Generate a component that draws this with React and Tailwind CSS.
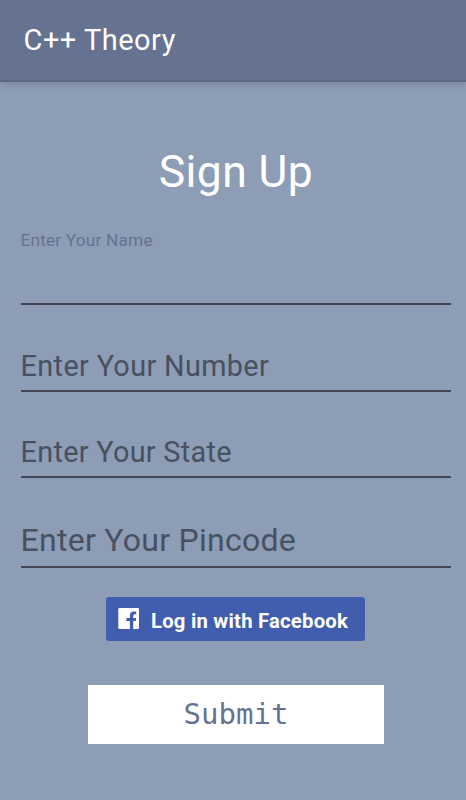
function Field({ label, className, textClassName }) {
  return (
    <div className={`flex w-[430px] border-b-2 border-[#424554] whitespace-nowrap ${className}`}>
      <span className={textClassName}>{label}</span>
    </div>
  );
}

function FacebookMark() {
  return (
    <svg width="22" height="22" viewBox="0 0 22 22" aria-hidden="true" className="shrink-0">
      <path
        fill="#fff"
        d="M1.5 0H19.8a1.2 1.2 0 0 1 1.2 1.2V19.8a1.2 1.2 0 0 1-1.2 1.2H15.2V13H17.7L18.1 10.1H15.2V8C15.2 6.9 15.7 6.3 16.9 6.3H18.2V3.7C17.7 3.6 16.8 3.5 16 3.5C13.4 3.5 11.9 5 11.9 7.6V10.1H8.4V13H11.9V21H1.5A1.2 1.2 0 0 1 .3 19.8V1.2A1.2 1.2 0 0 1 1.5 0Z"
      />
    </svg>
  );
}

export default function App() {
  return (
    <div className="flex h-[800px] w-[466px] flex-col overflow-hidden bg-[#8d9db6] font-['Roboto',sans-serif]">
      <header className="flex h-[82px] shrink-0 items-start border-b-2 border-[#5c6781] bg-[#667292] pl-[23.5px] shadow-[0_1px_8px_rgba(60,70,85,0.35)]">
        <h1 className="text-[29px] leading-[80px] tracking-[0.5px] text-white">C++ Theory</h1>
      </header>
      <main className="flex flex-col pl-[21px]">
        <h2 className="mt-[63px] h-[54px] w-[430px] text-center text-[44.5px] leading-[54px] tracking-[0.4px] text-white">Sign Up</h2>
        <Field label="Enter Your Name" className="mt-[31px] h-[75px]" textClassName="-ml-[0.5px] text-[17.3px] leading-[20px] tracking-[0.17px] text-[#667292]" />
        <Field label="Enter Your Number" className="mt-[41px] h-[46px]" textClassName="-ml-[0.4px] text-[28.8px] leading-[40px] tracking-[0.36px] text-[#47515f]" />
        <Field label="Enter Your State" className="mt-[40px] h-[46px]" textClassName="-ml-[0.4px] text-[28.8px] leading-[41px] tracking-[0.3px] text-[#47515f]" />
        <Field label="Enter Your Pincode" className="mt-[42px] h-[48px]" textClassName="-ml-[0.4px] text-[32px] leading-[40px] tracking-[0.27px] text-[#47515f]" />
        <button className="mt-[29px] ml-[85px] flex h-[44px] w-[259px] items-center rounded-[3px] bg-[#415dae] pl-3 whitespace-nowrap text-white">
          <FacebookMark />
          <span className="ml-[11px] pt-[4px] text-[20.3px] leading-[40px] font-bold tracking-[0.22px]">Log in with Facebook</span>
        </button>
        <button className="mt-[44px] ml-[67px] h-[59px] w-[296px] bg-white text-center font-['DejaVu_Sans_Mono',monospace] text-[29px] leading-[59px] text-[#667292]">
          Submit
        </button>
      </main>
    </div>
  );
}
